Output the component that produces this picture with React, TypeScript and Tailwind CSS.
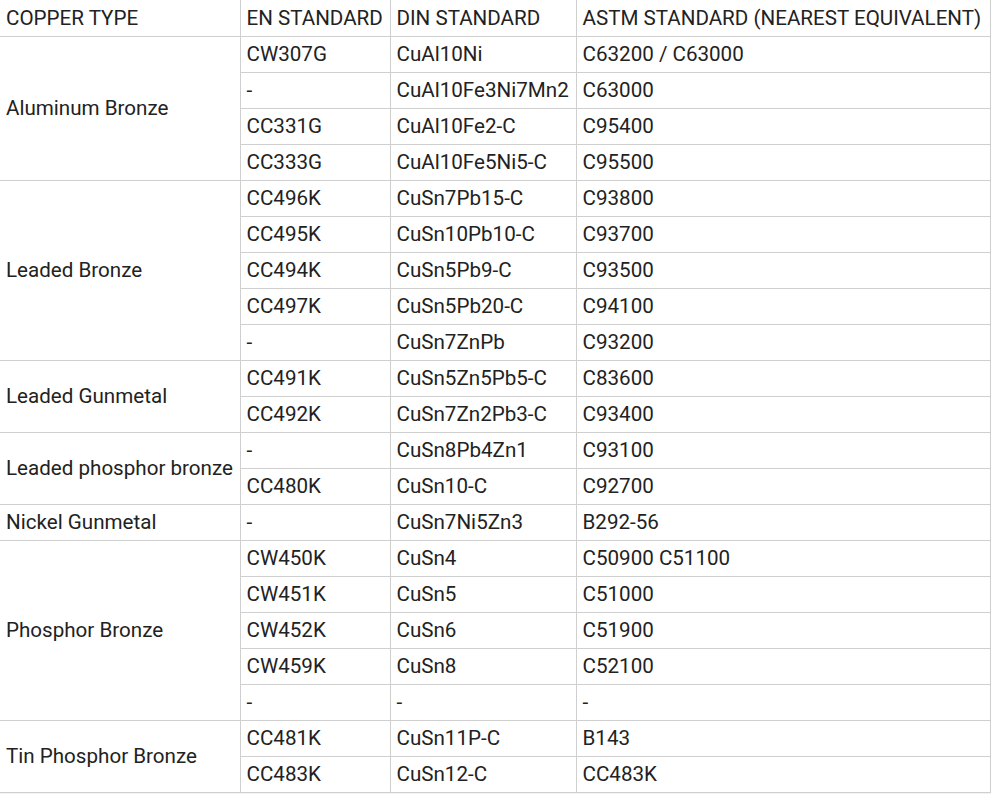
type Row = { type?: string; span?: number; en: string; din: string; astm: string }

const rows: Row[] = [
  { type: "Aluminum Bronze", span: 4, en: "CW307G", din: "CuAl10Ni", astm: "C63200 / C63000" },
  { en: "-", din: "CuAl10Fe3Ni7Mn2", astm: "C63000" },
  { en: "CC331G", din: "CuAl10Fe2-C", astm: "C95400" },
  { en: "CC333G", din: "CuAl10Fe5Ni5-C", astm: "C95500" },
  { type: "Leaded Bronze", span: 5, en: "CC496K", din: "CuSn7Pb15-C", astm: "C93800" },
  { en: "CC495K", din: "CuSn10Pb10-C", astm: "C93700" },
  { en: "CC494K", din: "CuSn5Pb9-C", astm: "C93500" },
  { en: "CC497K", din: "CuSn5Pb20-C", astm: "C94100" },
  { en: "-", din: "CuSn7ZnPb", astm: "C93200" },
  { type: "Leaded Gunmetal", span: 2, en: "CC491K", din: "CuSn5Zn5Pb5-C", astm: "C83600" },
  { en: "CC492K", din: "CuSn7Zn2Pb3-C", astm: "C93400" },
  { type: "Leaded phosphor bronze", span: 2, en: "-", din: "CuSn8Pb4Zn1", astm: "C93100" },
  { en: "CC480K", din: "CuSn10-C", astm: "C92700" },
  { type: "Nickel Gunmetal", span: 1, en: "-", din: "CuSn7Ni5Zn3", astm: "B292-56" },
  { type: "Phosphor Bronze", span: 5, en: "CW450K", din: "CuSn4", astm: "C50900 C51100" },
  { en: "CW451K", din: "CuSn5", astm: "C51000" },
  { en: "CW452K", din: "CuSn6", astm: "C51900" },
  { en: "CW459K", din: "CuSn8", astm: "C52100" },
  { en: "-", din: "-", astm: "-" },
  { type: "Tin Phosphor Bronze", span: 2, en: "CC481K", din: "CuSn11P-C", astm: "B143" },
  { en: "CC483K", din: "CuSn12-C", astm: "CC483K" },
]

const cell = "border border-[#cfcfcf] px-[6px] h-[36px] align-middle whitespace-nowrap overflow-hidden"

export default function App() {
  return (
    <div className="bg-[#f2f2f2] h-[794px] w-[991px] overflow-hidden text-[#222] text-[20.6px] leading-[24px] [font-family:Roboto,'Liberation_Sans',sans-serif]">
      <table className="bg-white border-collapse w-[991px] table-fixed">
        <colgroup>
          <col className="w-[240px]" />
          <col className="w-[150px]" />
          <col className="w-[186px]" />
          <col />
        </colgroup>
        <thead>
          <tr className="text-left">
            <th className={`${cell} font-normal border-t-0 border-l-0`}>COPPER TYPE</th>
            <th className={`${cell} font-normal border-t-0`}>EN STANDARD</th>
            <th className={`${cell} font-normal border-t-0`}>DIN STANDARD</th>
            <th className={`${cell} font-normal border-t-0`}>ASTM STANDARD (NEAREST EQUIVALENT)</th>
          </tr>
        </thead>
        <tbody>
          {rows.map((r, i) => (
            <tr key={i}>
              {r.type && (
                <td rowSpan={r.span} className={`${cell} border-l-0`}>
                  {r.type}
                </td>
              )}
              <td className={cell}>{r.en}</td>
              <td className={cell}>{r.din}</td>
              <td className={cell}>{r.astm}</td>
            </tr>
          ))}
        </tbody>
      </table>
    </div>
  )
}
